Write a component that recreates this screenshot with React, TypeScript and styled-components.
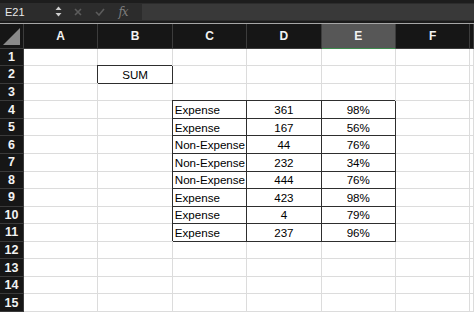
import styled, { createGlobalStyle } from 'styled-components';

const GlobalStyle = createGlobalStyle`
  html, body {
    margin: 0;
    padding: 0;
    background: #ffffff;
    overflow: hidden;
  }
  body {
    font-family: "Liberation Sans", Arial, sans-serif;
  }
`;

const Page = styled.div`
  width: 474px;
  height: 312px;
  overflow: hidden;
  display: flex;
  flex-direction: column;
  background: #ffffff;
`;

const FormulaBar = styled.div`
  height: 19px;
  border-top: 3px solid #1d1d1d;
  background: #2c2c2c;
  display: flex;
  align-items: center;
`;

const NameBox = styled.div`
  width: 50px;
  padding-left: 5px;
  color: #e8e8e8;
  font-size: 11px;
  box-sizing: border-box;
`;

const Spinner = styled.div`
  width: 16px;
  display: flex;
  justify-content: center;
  color: #cfcfcf;
`;

const BarIcon = styled.div<{ $w: number }>`
  width: ${p => p.$w}px;
  display: flex;
  justify-content: center;
  align-items: center;
  color: #5c5c5c;
`;

const Fx = styled.span`
  font-family: "DejaVu Serif", "Liberation Serif", serif;
  font-style: italic;
  font-size: 12px;
  color: #7c7c7c;
  letter-spacing: -1px;
`;

const FormulaInput = styled.div`
  flex: 1;
  height: 16px;
  margin-left: 6px;
  background: #393939;
`;

const Divider = styled.div`
  height: 2px;
  background: #1a1a1a;
  border-bottom: 1px solid #a6a6a6;
`;

const Sheet = styled.div`
  display: grid;
  grid-template-columns: 24px repeat(6, 74.4px) 1fr;
  grid-template-rows: 25px repeat(15, 17.57px);
  background: #ffffff;
`;

const Corner = styled.div`
  background: #161616;
  border-right: 1px solid #3c3c3c;
  border-bottom: 1px solid #3c3c3c;
  display: flex;
  align-items: flex-end;
  justify-content: flex-end;
  padding: 0 3px 3px 0;
`;

const ColHeader = styled.div<{ $active?: boolean }>`
  background: ${p => (p.$active ? '#575757' : '#161616')};
  color: #f2f2f2;
  font-size: 12px;
  font-weight: bold;
  display: flex;
  align-items: center;
  justify-content: center;
  border-right: 1px solid #3c3c3c;
  border-bottom: 1px solid ${p => (p.$active ? '#3f8b4e' : '#3c3c3c')};
`;

const RowHeader = styled.div`
  background: #161616;
  color: #f2f2f2;
  font-size: 12.5px;
  font-weight: bold;
  display: flex;
  align-items: center;
  justify-content: center;
  border-right: 1px solid #3c3c3c;
  border-bottom: 1px solid #3a3a3a;
`;

const Cell = styled.div<{ $boxed?: boolean; $align?: 'left' | 'center' }>`
  font-size: 11.6px;
  color: #000000;
  display: flex;
  align-items: center;
  justify-content: ${p => (p.$align === 'left' ? 'flex-start' : 'center')};
  padding-left: ${p => (p.$align === 'left' ? '2px' : '0')};
  white-space: nowrap;
  overflow: hidden;
  border-right: 1px solid ${p => (p.$boxed ? '#2e2e2e' : '#dcdcdc')};
  border-bottom: 1px solid ${p => (p.$boxed ? '#2e2e2e' : '#dcdcdc')};
  box-shadow: ${p => (p.$boxed ? '-1px -1px 0 0 #2e2e2e' : 'none')};
`;

const columns = ['A', 'B', 'C', 'D', 'E', 'F', ''];

const data: [string, number, string][] = [
  ['Expense', 361, '98%'],
  ['Expense', 167, '56%'],
  ['Non-Expense', 44, '76%'],
  ['Non-Expense', 232, '34%'],
  ['Non-Expense', 444, '76%'],
  ['Expense', 423, '98%'],
  ['Expense', 4, '79%'],
  ['Expense', 237, '96%'],
];

function renderRow(row: number) {
  const cells = [];
  for (let c = 0; c < 7; c++) {
    const key = `${row}-${c}`;
    if (row === 2 && c === 1) {
      cells.push(<Cell key={key} $boxed>SUM</Cell>);
      continue;
    }
    const entry = row >= 4 && row <= 11 ? data[row - 4] : null;
    if (entry && c >= 2 && c <= 4) {
      const value = entry[c - 2];
      cells.push(
        <Cell key={key} $boxed $align={c === 2 ? 'left' : 'center'}>
          {value}
        </Cell>
      );
      continue;
    }
    cells.push(<Cell key={key} />);
  }
  return cells;
}

export default function App() {
  const rows = Array.from({ length: 15 }, (_, i) => i + 1);
  return (
    <>
      <GlobalStyle />
      <Page>
        <FormulaBar>
          <NameBox>E21</NameBox>
          <Spinner>
            <svg width="7" height="11" viewBox="0 0 7 11">
              <path d="M3.5 0.5 L6.5 4 L0.5 4 Z" fill="currentColor" />
              <path d="M3.5 10.5 L6.5 7 L0.5 7 Z" fill="currentColor" />
            </svg>
          </Spinner>
          <BarIcon $w={24}>
            <svg width="8" height="8" viewBox="0 0 8 8">
              <path d="M1 1 L7 7 M7 1 L1 7" stroke="currentColor" strokeWidth="1.6" />
            </svg>
          </BarIcon>
          <BarIcon $w={20}>
            <svg width="10" height="8" viewBox="0 0 10 8">
              <path d="M1 4 L4 7 L9 1" stroke="currentColor" strokeWidth="1.6" fill="none" />
            </svg>
          </BarIcon>
          <BarIcon $w={26}>
            <Fx>fx</Fx>
          </BarIcon>
          <FormulaInput />
        </FormulaBar>
        <Divider />
        <Sheet>
          <Corner>
            <svg width="17" height="17" viewBox="0 0 17 17">
              <path d="M17 0 L17 17 L0 17 Z" fill="#8a8a8a" />
            </svg>
          </Corner>
          {columns.map((c, i) => (
            <ColHeader key={`h${i}`} $active={c === 'E'}>
              {c}
            </ColHeader>
          ))}
          {rows.map(r => [
            <RowHeader key={`r${r}`}>{r}</RowHeader>,
            ...renderRow(r),
          ])}
        </Sheet>
      </Page>
    </>
  );
}
